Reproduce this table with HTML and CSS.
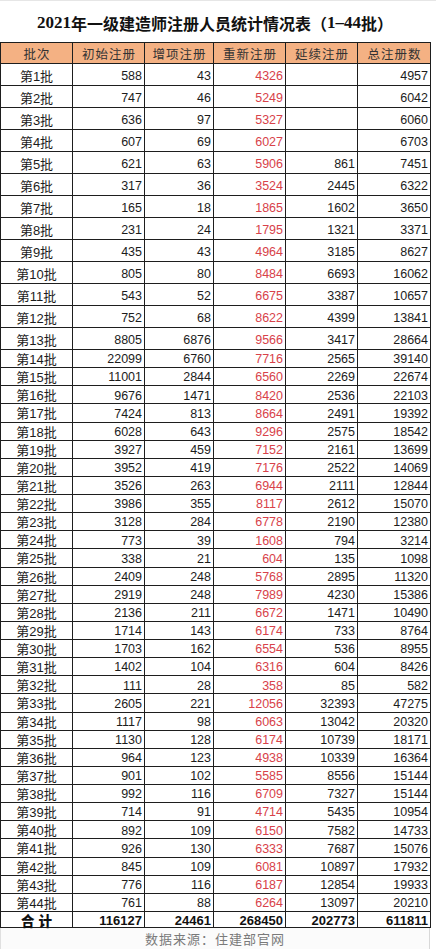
FILE: index.html
```html
<!DOCTYPE html>
<html lang="zh-CN">
<head>
<meta charset="utf-8">
<title>2021年一级建造师注册人员统计情况表</title>
<link rel="stylesheet" href="styles.css">
</head>
<body>
<div class="page">
  <h1 class="title"><span class="lat">2021</span>年一级建造师注册人员统计情况表（<span class="lat">1–44</span>批）</h1>
  <table class="grid">
    <colgroup>
      <col class="c1"><col class="c2"><col class="c3"><col class="c4"><col class="c5"><col class="c6">
    </colgroup>
    <thead>
      <tr class="head"><th>批次</th><th>初始注册</th><th>增项注册</th><th>重新注册</th><th>延续注册</th><th>总注册数</th></tr>
    </thead>
    <tbody>
      <tr class="tall"><td class="b">第1批</td><td>588</td><td>43</td><td class="r">4326</td><td></td><td>4957</td></tr>
      <tr class="tall"><td class="b">第2批</td><td>747</td><td>46</td><td class="r">5249</td><td></td><td>6042</td></tr>
      <tr class="tall"><td class="b">第3批</td><td>636</td><td>97</td><td class="r">5327</td><td></td><td>6060</td></tr>
      <tr class="tall"><td class="b">第4批</td><td>607</td><td>69</td><td class="r">6027</td><td></td><td>6703</td></tr>
      <tr class="tall"><td class="b">第5批</td><td>621</td><td>63</td><td class="r">5906</td><td>861</td><td>7451</td></tr>
      <tr class="tall"><td class="b">第6批</td><td>317</td><td>36</td><td class="r">3524</td><td>2445</td><td>6322</td></tr>
      <tr class="tall"><td class="b">第7批</td><td>165</td><td>18</td><td class="r">1865</td><td>1602</td><td>3650</td></tr>
      <tr class="tall"><td class="b">第8批</td><td>231</td><td>24</td><td class="r">1795</td><td>1321</td><td>3371</td></tr>
      <tr class="tall"><td class="b">第9批</td><td>435</td><td>43</td><td class="r">4964</td><td>3185</td><td>8627</td></tr>
      <tr class="tall"><td class="b">第10批</td><td>805</td><td>80</td><td class="r">8484</td><td>6693</td><td>16062</td></tr>
      <tr class="tall"><td class="b">第11批</td><td>543</td><td>52</td><td class="r">6675</td><td>3387</td><td>10657</td></tr>
      <tr class="tall"><td class="b">第12批</td><td>752</td><td>68</td><td class="r">8622</td><td>4399</td><td>13841</td></tr>
      <tr class="tall"><td class="b">第13批</td><td>8805</td><td>6876</td><td class="r">9566</td><td>3417</td><td>28664</td></tr>
      <tr><td class="b">第14批</td><td>22099</td><td>6760</td><td class="r">7716</td><td>2565</td><td>39140</td></tr>
      <tr><td class="b">第15批</td><td>11001</td><td>2844</td><td class="r">6560</td><td>2269</td><td>22674</td></tr>
      <tr><td class="b">第16批</td><td>9676</td><td>1471</td><td class="r">8420</td><td>2536</td><td>22103</td></tr>
      <tr><td class="b">第17批</td><td>7424</td><td>813</td><td class="r">8664</td><td>2491</td><td>19392</td></tr>
      <tr><td class="b">第18批</td><td>6028</td><td>643</td><td class="r">9296</td><td>2575</td><td>18542</td></tr>
      <tr><td class="b">第19批</td><td>3927</td><td>459</td><td class="r">7152</td><td>2161</td><td>13699</td></tr>
      <tr><td class="b">第20批</td><td>3952</td><td>419</td><td class="r">7176</td><td>2522</td><td>14069</td></tr>
      <tr><td class="b">第21批</td><td>3526</td><td>263</td><td class="r">6944</td><td>2111</td><td>12844</td></tr>
      <tr><td class="b">第22批</td><td>3986</td><td>355</td><td class="r">8117</td><td>2612</td><td>15070</td></tr>
      <tr><td class="b">第23批</td><td>3128</td><td>284</td><td class="r">6778</td><td>2190</td><td>12380</td></tr>
      <tr><td class="b">第24批</td><td>773</td><td>39</td><td class="r">1608</td><td>794</td><td>3214</td></tr>
      <tr><td class="b">第25批</td><td>338</td><td>21</td><td class="r">604</td><td>135</td><td>1098</td></tr>
      <tr><td class="b">第26批</td><td>2409</td><td>248</td><td class="r">5768</td><td>2895</td><td>11320</td></tr>
      <tr><td class="b">第27批</td><td>2919</td><td>248</td><td class="r">7989</td><td>4230</td><td>15386</td></tr>
      <tr><td class="b">第28批</td><td>2136</td><td>211</td><td class="r">6672</td><td>1471</td><td>10490</td></tr>
      <tr><td class="b">第29批</td><td>1714</td><td>143</td><td class="r">6174</td><td>733</td><td>8764</td></tr>
      <tr><td class="b">第30批</td><td>1703</td><td>162</td><td class="r">6554</td><td>536</td><td>8955</td></tr>
      <tr><td class="b">第31批</td><td>1402</td><td>104</td><td class="r">6316</td><td>604</td><td>8426</td></tr>
      <tr><td class="b">第32批</td><td>111</td><td>28</td><td class="r">358</td><td>85</td><td>582</td></tr>
      <tr><td class="b">第33批</td><td>2605</td><td>221</td><td class="r">12056</td><td>32393</td><td>47275</td></tr>
      <tr><td class="b">第34批</td><td>1117</td><td>98</td><td class="r">6063</td><td>13042</td><td>20320</td></tr>
      <tr><td class="b">第35批</td><td>1130</td><td>128</td><td class="r">6174</td><td>10739</td><td>18171</td></tr>
      <tr><td class="b">第36批</td><td>964</td><td>123</td><td class="r">4938</td><td>10339</td><td>16364</td></tr>
      <tr><td class="b">第37批</td><td>901</td><td>102</td><td class="r">5585</td><td>8556</td><td>15144</td></tr>
      <tr><td class="b">第38批</td><td>992</td><td>116</td><td class="r">6709</td><td>7327</td><td>15144</td></tr>
      <tr><td class="b">第39批</td><td>714</td><td>91</td><td class="r">4714</td><td>5435</td><td>10954</td></tr>
      <tr><td class="b">第40批</td><td>892</td><td>109</td><td class="r">6150</td><td>7582</td><td>14733</td></tr>
      <tr><td class="b">第41批</td><td>926</td><td>130</td><td class="r">6333</td><td>7687</td><td>15076</td></tr>
      <tr><td class="b">第42批</td><td>845</td><td>109</td><td class="r">6081</td><td>10897</td><td>17932</td></tr>
      <tr><td class="b">第43批</td><td>776</td><td>116</td><td class="r">6187</td><td>12854</td><td>19933</td></tr>
      <tr><td class="b">第44批</td><td>761</td><td>88</td><td class="r">6264</td><td>13097</td><td>20210</td></tr>
      <tr class="total"><td class="b">合计</td><td>116127</td><td>24461</td><td>268450</td><td>202773</td><td>611811</td></tr>
    </tbody>
  </table>
  <div class="source">数据来源：住建部官网</div>
</div>
</body>
</html>
```

FILE: styles.css
```css
html, body {
  margin: 0;
  padding: 0;
  background: #ffffff;
}

.page {
  width: 436px;
  height: 949px;
  overflow: hidden;
  background: #ffffff;
}

.title {
  margin: 0;
  height: 42px;
  box-sizing: border-box;
  padding-top: 3px;
  border-top: 1px solid #e6e6e6;
  display: flex;
  align-items: center;
  justify-content: center;
  font-family: "Noto Sans CJK SC", sans-serif;
  font-weight: 700;
  font-size: 16px;
  color: #111111;
  padding-right: 6px;
}

.title .lat {
  font-family: "Liberation Serif", serif;
  font-weight: 700;
  font-size: 17px;
}

.grid {
  border-collapse: collapse;
  table-layout: fixed;
  width: 430px;
  font-family: "Liberation Sans", "Noto Sans CJK SC", sans-serif;
  color: #1c1c1c;
}

.c1 { width: 72px; }
.c2 { width: 72px; }
.c3 { width: 69px; }
.c4 { width: 72px; }
.c5 { width: 72px; }
.c6 { width: 73px; }

.grid th,
.grid td {
  border: 1px solid #1e1e1e;
  padding: 2px 2px 0 0;
  line-height: 1;
  white-space: nowrap;
}

.grid th {
  background: #f4b183;
  height: 18px;
  font-family: "Noto Sans CJK SC", sans-serif;
  font-weight: 400;
  font-size: 12.5px;
  letter-spacing: 1px;
  color: #333333;
  text-align: center;
  padding: 2px 0 0 1px;
}

.grid td {
  height: 15.13px;
  font-size: 12.5px;
  text-align: right;
}

.grid tr.tall td {
  height: 17px;
  padding-top: 4px;
}

.grid td.b {
  text-align: center;
  padding-right: 0;
  font-size: 13px;
}

.grid td.r {
  color: #d8424a;
}

.grid tr.total td {
  height: 13px;
  padding-top: 2px;
  font-weight: 700;
  font-size: 13px;
  color: #111111;
}

.grid tr.total td.b {
  font-family: "Noto Sans CJK SC", sans-serif;
  font-weight: 900;
  letter-spacing: 4px;
  padding-left: 4px;
  font-size: 13.5px;
}

.source {
  height: 21px;
  width: 430px;
  box-sizing: border-box;
  border-left: 1px solid #e0e0e0;
  border-right: 1px solid #d8d8d8;
  display: flex;
  align-items: center;
  justify-content: center;
  font-family: "Noto Sans CJK SC", sans-serif;
  font-size: 13px;
  letter-spacing: 1px;
  color: #7a7a7a;
  background: #fbfbfb;
}
```
